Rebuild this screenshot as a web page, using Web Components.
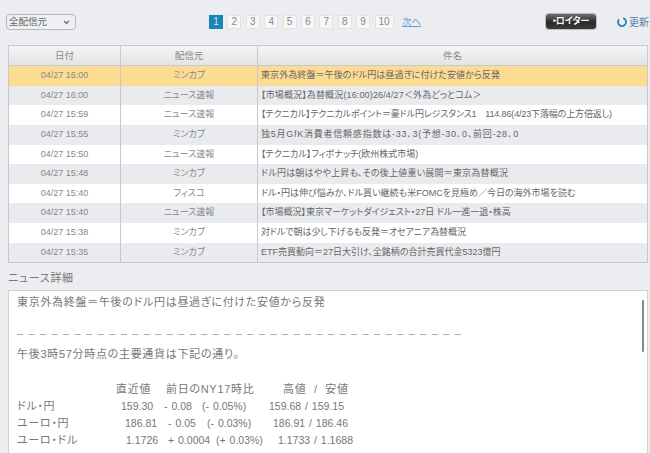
<!DOCTYPE html>
<html lang="ja">
<head>
<meta charset="utf-8">
<title>ニュース</title>
<style>
  html, body { margin: 0; height: 453px; overflow: hidden; }
  body {
    background: #ebedf1;
    color: #777;
    font-family: "Liberation Sans", "Noto Sans CJK JP", sans-serif;
    font-feature-settings: "palt";
  }
</style>
</head>
<body>
<news-toolbar></news-toolbar>
<news-table>
  <news-row selected style="letter-spacing:.08px" date="04/27 16:00" source="ミンカブ">東京外為終盤＝午後のドル円は昼過ぎに付けた安値から反発</news-row>
  <news-row style="letter-spacing:.14px" date="04/27 16:00" source="ニュース速報">【市場概況】為替概況(16:00)26/4/27＜外為どっとコム＞</news-row>
  <news-row style="letter-spacing:-.14px" date="04/27 15:59" source="ニュース速報">【テクニカル】テクニカルポイント＝豪ドル円レジスタンス1　114.86(4/23下落幅の上方倍返し)</news-row>
  <news-row style="letter-spacing:.76px" date="04/27 15:55" source="ミンカブ">独5月GfK消費者信頼感指数は-33．3(予想-30．0、前回-28．0</news-row>
  <news-row style="letter-spacing:0" date="04/27 15:50" source="ニュース速報">【テクニカル】フィボナッチ(欧州株式市場)</news-row>
  <news-row style="letter-spacing:.2px" date="04/27 15:48" source="ミンカブ">ドル円は朝はやや上昇も、その後上値重い展開＝東京為替概況</news-row>
  <news-row style="letter-spacing:0" date="04/27 15:40" source="フィスコ">ドル・円は伸び悩みか、ドル買い継続も米FOMCを見極め／今日の海外市場を読む</news-row>
  <news-row style="letter-spacing:0" date="04/27 15:40" source="ニュース速報">【市場概況】東京マーケットダイジェスト・27日 ドル一進一退・株高</news-row>
  <news-row style="letter-spacing:-.08px" date="04/27 15:38" source="ミンカブ">対ドルで朝は少し下げるも反発＝オセアニア為替概況</news-row>
  <news-row style="letter-spacing:0" date="04/27 15:35" source="ミンカブ">ETF売買動向＝27日大引け、全銘柄の合計売買代金5323億円</news-row>
</news-table>
<news-detail>
  <div slot="title">東京外為終盤＝午後のドル円は昼過ぎに付けた安値から反発</div>
</news-detail>

<script>
// top bar: source select, pager, reuters button, refresh
class NewsToolbar extends HTMLElement {
  constructor() {
    super();
    this.attachShadow({ mode: 'open' });
    const pages = [2, 3, 4, 5, 6, 7, 8, 9, 10].map(n => `<a class="${n === 10 ? 'wide' : ''}">${n}</a>`).join('');
    this.shadowRoot.innerHTML = `
      <style>
        :host { display: flex; align-items: center; height: 45px; padding: 0 0 2px 6px; box-sizing: border-box; font-size: 10px; }
        .source { position: relative; width: 70px; height: 16px; }
        select { appearance: none; display: block; width: 70px; height: 16px; margin: 0; padding: 0 0 0 2px; font: inherit; font-size: 9.5px; color: #666; background: #eff0f3; border: 1px solid #b4b7bc; border-radius: 4px; box-sizing: border-box; }
        .source svg { position: absolute; top: 6px; right: 6px; }
        .pager { display: flex; gap: 4.4px; margin-left: 133px; align-items: center; }
        .pager a { width: 14px; height: 14px; line-height: 14px; text-align: center; background: #f7f7f7; box-shadow: inset 0 0 0 1px #e2e3e6; color: #888; }
        .pager a.on { background: #1b85b4; color: #cfe7f2; box-shadow: none; }
        .pager a.wide { width: 19px; }
        .pager .next { width: auto; margin-left: 4px; background: none; box-shadow: none; color: #6b9ad0; text-decoration: underline; font-size: 9.5px; }
        .reuters { margin-left: auto; width: 50px; height: 15px; line-height: 15px; border-radius: 3px; background: linear-gradient(#6e6e6e, #2a2a2a 55%, #3a3a3a); color: #f4f4f4; font-size: 9px; font-weight: bold; text-align: center; box-shadow: 0 0 0 1px #bbb; }
        .refresh { display: flex; align-items: center; gap: 2px; width: 33px; margin-left: 21px; color: #5c7fa8; font-size: 10px; white-space: nowrap; }
        svg { display: block; }
      </style>
      <div class="source">
        <select><option>全配信元</option></select>
        <svg width="7" height="5" viewBox="0 0 7 5"><path d="M1 1l2.5 2.5L6 1" fill="none" stroke="#666" stroke-width="1.2"/></svg>
      </div>
      <div class="pager"><a class="on">1</a>${pages}<a class="next">次へ</a></div>
      <div class="reuters">‣ロイター</div>
      <div class="refresh">
        <svg width="10" height="10" viewBox="0 0 10 10"><path d="M6.2 1.2A4 4 0 1 1 2 2.4" fill="none" stroke="#2a80c4" stroke-width="1.8"/></svg>
        <span>更新</span>
      </div>`;
  }
}

class NewsTable extends HTMLElement {
  constructor() {
    super();
    this.attachShadow({ mode: 'open' });
    this.shadowRoot.innerHTML = `
      <style>
        :host { display: block; margin: 0 2px 0 8px; border: 1px solid #c6c9ce; border-top-color: #c9cbcf; box-sizing: border-box; font-size: 9px; }
        .head { display: grid; grid-template-columns: 111px 137px 1fr; height: 19px; line-height: 19px; text-align: center; background: linear-gradient(#f5f5f5, #e3e4e6); border-bottom: 1px solid #c6c9ce; color: #888; font-size: 9.5px; }
        .head div + div { border-left: 1px solid #c6c9ce; }
      </style>
      <div class="head"><div>日付</div><div>配信元</div><div>件名</div></div>
      <slot></slot>`;
  }
}

class NewsRow extends HTMLElement {
  constructor() {
    super();
    this.attachShadow({ mode: 'open' });
    this.shadowRoot.innerHTML = `
      <style>
        :host { display: grid; grid-template-columns: 111px 137px 1fr; height: 19.65px; line-height: 19.65px; background: #fff; white-space: nowrap; }
        :host(:nth-child(even)) { background: #e9ebef; }
        :host([selected]) { background: #fbdc92; }
        div { text-align: center; color: #888; }
        div + div { border-left: 1px solid #c6c9ce; }
        #date, #source { letter-spacing: 0; }
        .subject { text-align: left; padding-left: 3px; overflow: hidden; color: #666; }
      </style>
      <div id="date"></div>
      <div id="source"></div>
      <div class="subject"><slot></slot></div>`;
  }
  connectedCallback() {
    this.shadowRoot.getElementById('date').textContent = this.getAttribute('date');
    this.shadowRoot.getElementById('source').textContent = this.getAttribute('source');
  }
}

// the rates are lined up with their own column widths per row, the original did it with spaces
class NewsDetail extends HTMLElement {
  constructor() {
    super();
    this.attachShadow({ mode: 'open' });
    this.shadowRoot.innerHTML = `
      <style>
        :host { display: block; margin: 0 2px 0 8px; }
        h2 { margin: 0; height: 27px; line-height: 31px; font-size: 11px; font-weight: normal; color: #777; letter-spacing: 0.7px; }
        .panel { position: relative; height: 170px; padding: 3px 0 0 8px; background: #fff; border: 1px solid #d0d2d6; border-bottom: 0; overflow: hidden; font-size: 11px; line-height: 17.25px; letter-spacing: 0.7px; color: #777; }
        .thumb { position: absolute; top: 9px; right: 3px; width: 2px; height: 52px; background: #8a8a8a; border-radius: 1px; }
        .line { height: 17.25px; white-space: pre; }
        .dash { letter-spacing: 5.4px; line-height: 9px; color: #999; font-feature-settings: normal; }
        .rate { display: grid; }
        .rate span + span { font-size: 10.5px; letter-spacing: 0; word-spacing: 1px; }
        .rate.top span + span { font-size: 11px; letter-spacing: 0.7px; word-spacing: 0; }
      </style>
      <h2>ニュース詳細</h2>
      <div class="panel">
        <div class="line"><slot name="title"></slot></div>
        <div class="line"></div>
        <div class="line dash">${'–'.repeat(39)}</div>
        <div class="line">午後3時57分時点の主要通貨は下記の通り。</div>
        <div class="line"></div>
        <div class="rate top line" style="grid-template-columns:99px 50px 117px auto"><span></span><span>直近値</span><span>前日のNY17時比</span><span>高値  /  安値</span></div>
        <div class="rate line" style="grid-template-columns:104px 43px 38px 67px auto"><span>ドル・円</span><span>159.30</span><span>- 0.08</span><span>(- 0.05%)</span><span>159.68 / 159.15</span></div>
        <div class="rate line" style="grid-template-columns:108px 43px 39px 66px auto"><span>ユーロ・円</span><span>186.81</span><span>- 0.05</span><span>(- 0.03%)</span><span>186.91 / 186.46</span></div>
        <div class="rate line" style="grid-template-columns:109px 42px 48px 62px auto"><span>ユーロ・ドル</span><span>1.1726</span><span>+ 0.0004</span><span>(+ 0.03%)</span><span>1.1733 / 1.1688</span></div>
        <div class="thumb"></div>
      </div>`;
  }
}

customElements.define('news-toolbar', NewsToolbar);
customElements.define('news-table', NewsTable);
customElements.define('news-row', NewsRow);
customElements.define('news-detail', NewsDetail);
</script>
</body>
</html>
